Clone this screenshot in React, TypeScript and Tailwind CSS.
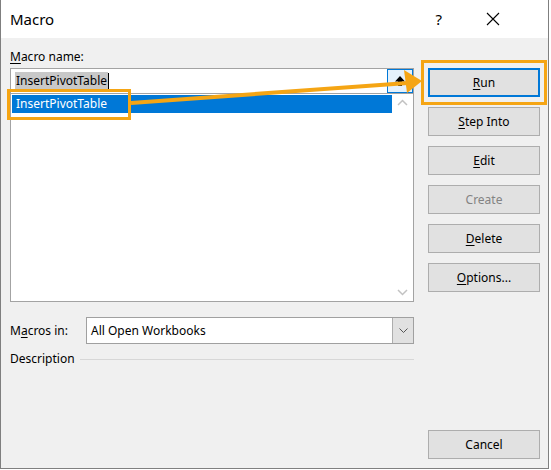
import React from "react";

const ui = { fontFamily: '"Segoe UI", "Noto Sans", "Open Sans", sans-serif' };

function Btn({
  children,
  primary,
  disabled,
  className = "",
}: {
  children: React.ReactNode;
  primary?: boolean;
  disabled?: boolean;
  className?: string;
}) {
  return (
    <div
      className={
        "flex h-[29px] w-[112px] items-center justify-center bg-[#e1e1e1] text-[12px] " +
        (primary ? "border-2 border-[#0078d7] " : "border border-[#adadad] ") +
        (disabled ? "text-[#838383] " : "text-black ") +
        className
      }
    >
      {children}
    </div>
  );
}

function U({ children }: { children: React.ReactNode }) {
  return <span className="underline underline-offset-[2px]">{children}</span>;
}

export default function App() {
  return (
    <div className="relative h-[470px] w-[551px] overflow-hidden bg-white" style={ui}>
      <div className="flex h-[469px] w-[549px] flex-col border-b border-l border-r border-[#7f7f7f]">
        {/* title bar */}
        <div className="flex h-[38px] items-center bg-white pl-[9px] pr-[10px]">
          <span className="text-[15px] text-black">Macro</span>
          <span className="ml-auto mr-[44px] text-[15px] text-black">?</span>
          <svg width="14" height="14" viewBox="0 0 14 14" className="mr-[38px]">
            <path d="M1 1 L13 13 M13 1 L1 13" stroke="#000" strokeWidth="1.1" />
          </svg>
        </div>

        {/* body */}
        <div className="flex flex-1 bg-[#f0f0f0] pl-[9px]">
          {/* left column */}
          <div className="flex w-[404px] flex-col">
            <div className="mt-[11px] h-[16px] text-[12px] leading-[16px] text-black">
              <U>M</U>acro name:
            </div>
            <div className="mt-[3px] flex h-[25px] items-center border-l border-r border-t border-[#a3a3a3] bg-white pl-[4px]">
              <span className="bg-[#c8c8c8] px-px text-[12px] leading-[18px] text-black">InsertPivotTable</span>
              <span className="h-[17px] w-px bg-black" />
              <div className="ml-auto mr-0 flex h-[24px] w-[26px] items-center justify-center border border-[#0078d7] bg-[#e5f1fb]">
                <svg width="12" height="12" viewBox="0 0 12 12">
                  <path d="M6 1 L11 6.5 L8 6.5 L8 11 L4 11 L4 6.5 L1 6.5 Z" fill="#000" />
                </svg>
              </div>
            </div>
            <div className="flex h-[209px] border border-[#a3a3a3] bg-white">
              <div className="flex-1 pl-px pt-px">
                <div className="flex h-[18px] items-center bg-[#0078d7] pl-[4px] text-[12px] text-white">
                  InsertPivotTable
                </div>
              </div>
              <div className="flex w-[21px] flex-col items-center justify-between py-[5px]">
                <svg width="11" height="7" viewBox="0 0 11 7">
                  <path d="M1 6 L5.5 1.5 L10 6" fill="none" stroke="#c2c2c2" strokeWidth="1.5" />
                </svg>
                <svg width="11" height="7" viewBox="0 0 11 7">
                  <path d="M1 1 L5.5 5.5 L10 1" fill="none" stroke="#c2c2c2" strokeWidth="1.5" />
                </svg>
              </div>
            </div>

            <div className="mt-[15px] flex items-center">
              <div className="w-[76px] text-[12px] text-black">
                M<U>a</U>cros in:
              </div>
              <div className="flex h-[27px] flex-1 items-center border border-[#a0a0a0] bg-white">
                <span className="pl-[4px] text-[12px] text-black">All Open Workbooks</span>
                <div className="ml-auto flex h-full w-[21px] items-center justify-center border-l border-[#adadad] bg-[#e1e1e1]">
                  <svg width="9" height="5" viewBox="0 0 9 5">
                    <path d="M0.5 0.5 L4.5 4.5 L8.5 0.5" fill="none" stroke="#555" strokeWidth="1" />
                  </svg>
                </div>
              </div>
            </div>

            <div className="mt-[6px] flex items-center">
              <span className="text-[12px] leading-[18px] text-black">Description</span>
              <div className="ml-[5px] h-px flex-1 bg-[#d7d7d7]" />
            </div>
          </div>

          {/* right column */}
          <div className="ml-[14px] flex flex-col pt-[30px] pb-[9px]">
            <Btn primary>
              <U>R</U>un
            </Btn>
            <Btn className="mt-[10px]">
              <U>S</U>tep Into
            </Btn>
            <Btn className="mt-[10px]">
              <U>E</U>dit
            </Btn>
            <Btn className="mt-[10px]" disabled>
              Create
            </Btn>
            <Btn className="mt-[10px]">
              <U>D</U>elete
            </Btn>
            <Btn className="mt-[10px]">
              <U>O</U>ptions...
            </Btn>
            <Btn className="mt-auto">Cancel</Btn>
          </div>
        </div>
      </div>

      {/* callout highlights */}
      <div className="pointer-events-none absolute left-[7px] top-[89px] h-[31px] w-[124px] border-[3px] border-[#f5a514]" />
      <div className="pointer-events-none absolute left-[421px] top-[60px] h-[45px] w-[126px] border-[3px] border-[#f5a514]" />
      <svg className="pointer-events-none absolute left-0 top-0" width="551" height="470">
        <line x1="131" y1="103" x2="408" y2="83" stroke="#f5a514" strokeWidth="4" />
        <path d="M422 81 L404 70 L407 93 Z" fill="#f5a514" />
      </svg>
    </div>
  );
}
